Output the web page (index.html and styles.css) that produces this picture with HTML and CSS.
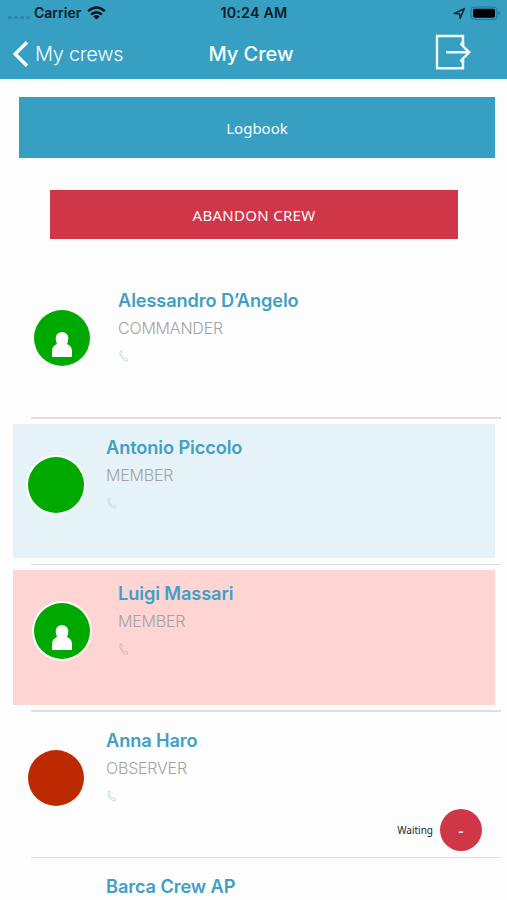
FILE: index.html
```html
<!DOCTYPE html>
<html lang="en">
<head>
<meta charset="utf-8">
<title>My Crew</title>
<link rel="stylesheet" href="styles.css">
</head>
<body>
<header class="header">
  <div class="status">
    <div class="status-left">
      <span class="signal"><i></i><i></i><i></i><i></i></span>
      <span class="carrier">Carrier</span>
      <svg class="wifi" width="19" height="14" viewBox="0 0 19 14"><g fill="none" stroke="#03141b" stroke-width="2.4"><path d="M1.2 5.2Q9.5-2.2 17.8 5.2"/><path d="M4.2 8.5Q9.5 3.8 14.8 8.5"/></g><path d="M6.4 10.4Q9.5 7.8 12.6 10.4L9.5 13.6Z" fill="#03141b"/></svg>
    </div>
    <span class="time">10:24 AM</span>
    <div class="status-right">
      <svg width="13" height="13" viewBox="0 0 13 13"><path d="M1.3 6.6 11.4 1.5 7.1 11.4 6.5 6.7Z" fill="none" stroke="#0b2f3c" stroke-width="1.5" stroke-linejoin="round"/></svg>
      <svg width="31" height="15" viewBox="0 0 31 15"><rect x="1" y="1" width="26" height="12.5" rx="3.5" fill="none" stroke="#257894" stroke-width="1.1"/><rect x="3" y="2.8" width="22" height="9" rx="1.8"/><path d="M28.6 5.2v4q1.5-.6 1.5-2t-1.5-2Z" fill="#257894"/></svg>
    </div>
  </div>
  <nav class="nav">
    <a class="back"><svg width="17" height="28" viewBox="0 0 17 28"><path d="M15 2.2 3.2 14 15 25.8" fill="none" stroke="#fff" stroke-width="3.4"/></svg><span>My crews</span></a>
    <h1 class="title">My Crew</h1>
    <svg class="exit" width="36" height="36" viewBox="0 0 36 36"><g fill="none" stroke="#f0fbff" stroke-width="2.4"><path d="M28 9V2H2V34.3H28V28"/><path d="M26 8.6 29.2 10.8M26 28.3 29.2 26.4M11 18.3H34M25.5 9.5 34.2 18.3 25.5 27.1"/></g></svg>
  </nav>
</header>
<main>
  <button class="logbook"><span>Logbook</span></button>
  <button class="abandon"><span>ABANDON CREW</span></button>
  <ul class="crew">
    <li class="row">
      <article class="card inset">
        <span class="avatar"><svg width="20" height="25" viewBox="0 0 20 25"><path d="M0 25V19Q0 14 5 12Q3.7 9.8 3.7 6.3A6.3 6.3 0 0 1 16.3 6.3Q16.3 9.8 15 12Q20 14 20 19V25Z" fill="#fff"/></svg></span>
        <div class="info"><h2>Alessandro D’Angelo</h2><p>COMMANDER</p><svg class="phone" width="10" height="12" viewBox="0 0 10 12"><path d="M1 1.2 2.5.8 3.5 3.6 2.5 4.6Q3.2 7.3 5.3 8.7L6.8 7.9 9 9.5 8.2 11Q5.8 11.6 3.2 8.9Q.2 5.4 1 1.2Z"/></svg></div>
      </article>
    </li>
    <li class="row">
      <article class="card blue">
        <span class="avatar ring"></span>
        <div class="info"><h2>Antonio Piccolo</h2><p>MEMBER</p><svg class="phone" width="10" height="12" viewBox="0 0 10 12"><path d="M1 1.2 2.5.8 3.5 3.6 2.5 4.6Q3.2 7.3 5.3 8.7L6.8 7.9 9 9.5 8.2 11Q5.8 11.6 3.2 8.9Q.2 5.4 1 1.2Z"/></svg></div>
      </article>
    </li>
    <li class="row">
      <article class="card pink inset">
        <span class="avatar ring"><svg width="20" height="25" viewBox="0 0 20 25"><path d="M0 25V19Q0 14 5 12Q3.7 9.8 3.7 6.3A6.3 6.3 0 0 1 16.3 6.3Q16.3 9.8 15 12Q20 14 20 19V25Z" fill="#fff"/></svg></span>
        <div class="info"><h2>Luigi Massari</h2><p>MEMBER</p><svg class="phone" width="10" height="12" viewBox="0 0 10 12"><path d="M1 1.2 2.5.8 3.5 3.6 2.5 4.6Q3.2 7.3 5.3 8.7L6.8 7.9 9 9.5 8.2 11Q5.8 11.6 3.2 8.9Q.2 5.4 1 1.2Z"/></svg></div>
      </article>
    </li>
    <li class="row">
      <article class="card">
        <span class="avatar red"></span>
        <div class="info"><h2>Anna Haro</h2><p>OBSERVER</p><svg class="phone" width="10" height="12" viewBox="0 0 10 12"><path d="M1 1.2 2.5.8 3.5 3.6 2.5 4.6Q3.2 7.3 5.3 8.7L6.8 7.9 9 9.5 8.2 11Q5.8 11.6 3.2 8.9Q.2 5.4 1 1.2Z"/></svg></div>
        <div class="waiting"><span>Waiting</span><button class="remove"><i class="dash">-</i></button></div>
      </article>
    </li>
    <li class="row last">
      <article class="card">
        <span class="avatar empty"></span>
        <div class="info"><h2>Barca Crew AP</h2></div>
      </article>
    </li>
  </ul>
</main>
</body>
</html>
```
FILE: styles.css
```css
* { box-sizing: border-box; }
body { margin: 0; height: 900px; overflow: hidden; background: #fdfdfd; font-family: Inter, "Liberation Sans", sans-serif; }
h1, h2, p, ul { margin: 0; padding: 0; }
button { border: 0; padding: 0; display: flex; align-items: center; justify-content: center; color: #f5fbfd; font-family: "Noto Sans", sans-serif; }
svg { display: block; flex: none; }
span { white-space: nowrap; }
.header { height: 79px; background: #379fc1; }
.status { height: 26px; display: grid; grid-template-columns: 1fr auto 1fr; align-items: center; padding: 0 6px 0 8px; color: #06202a; font-weight: 600; font-size: 14px; line-height: 18px; }
.status-left { display: flex; align-items: center; }
.signal { display: flex; gap: 2px; margin: 8px 4px 0 0; }
.signal i { width: 4px; height: 3px; border-radius: 2px; background: #2d87a5; }
.wifi { margin-left: 6px; }
.time { font-size: 14.3px; margin-left: -1px; letter-spacing: .2px; }
.status-right { display: flex; justify-content: flex-end; align-items: center; gap: 4px; }
.nav { height: 53px; display: grid; grid-template-columns: 1fr auto 1fr; align-items: center; padding: 2px 36px 0 12px; color: #f5fcff; }
.back { display: flex; align-items: center; gap: 6px; font-size: 20px; font-weight: 300; letter-spacing: -.3px; }
.title { font-size: 20px; font-weight: 550; margin-left: 19px; }
.exit { justify-self: end; margin-top: -4px; }
.logbook { width: 476px; height: 61px; margin: 18px 0 0 19px; background: #379fc1; font-size: 15px; padding-top: 1px; }
.abandon { width: 408px; height: 49px; margin: 32px 0 0 50px; background: #cf3648; font-size: 15px; letter-spacing: .3px; }
.crew { list-style: none; margin-top: 32px; }
.row { height: 146.6px; padding: 6px 12px 0 13px; position: relative; }
.last { height: 42px; overflow: hidden; }
.row::after { content: ""; position: absolute; left: 31px; right: 6px; bottom: -1px; height: 1.5px; background: #dedfdf; }
.last::after { content: none; }
.card { height: 134.5px; display: flex; position: relative; padding-left: 15px; }
.last .card { height: 36px; }
.inset { padding-left: 21px; }
.avatar { width: 56px; height: 56px; border-radius: 50%; background: #00a900; margin-top: 33px; display: flex; justify-content: center; align-items: flex-end; padding-bottom: 9px; flex: none; }
.ring { box-shadow: 0 0 0 2px #fbfdfd; }
.red { background: #bd2900; }
.empty { background: none; }
.blue { background: #e5f2f7; }
.pink { background: #ffd5d4; }
.info { margin-left: 22px; padding-top: 11px; }
.inset .info { margin-left: 28px; }
.info h2 { font-size: 18.2px; line-height: 24px; font-weight: 560; letter-spacing: -.1px; color: #429fc3; white-space: nowrap; }
.info p { font-size: 16px; line-height: 20px; font-weight: 350; letter-spacing: -.2px; color: #a3a3a3; margin-top: 6px; }
.phone { margin: 12px 0 0 1px; fill: none; stroke: #c3dcdd; stroke-width: .9; }
.pink .phone { stroke: #d0b6b7; }
.waiting { position: absolute; right: 13px; bottom: 0; display: flex; align-items: center; gap: 7px; font-family: "Noto Sans", sans-serif; font-size: 10px; color: #222; }
.remove { width: 42px; height: 42px; border-radius: 50%; background: #cf3648; font-size: 15px; }
.dash { font-style: normal; font-weight: 600; }
```
